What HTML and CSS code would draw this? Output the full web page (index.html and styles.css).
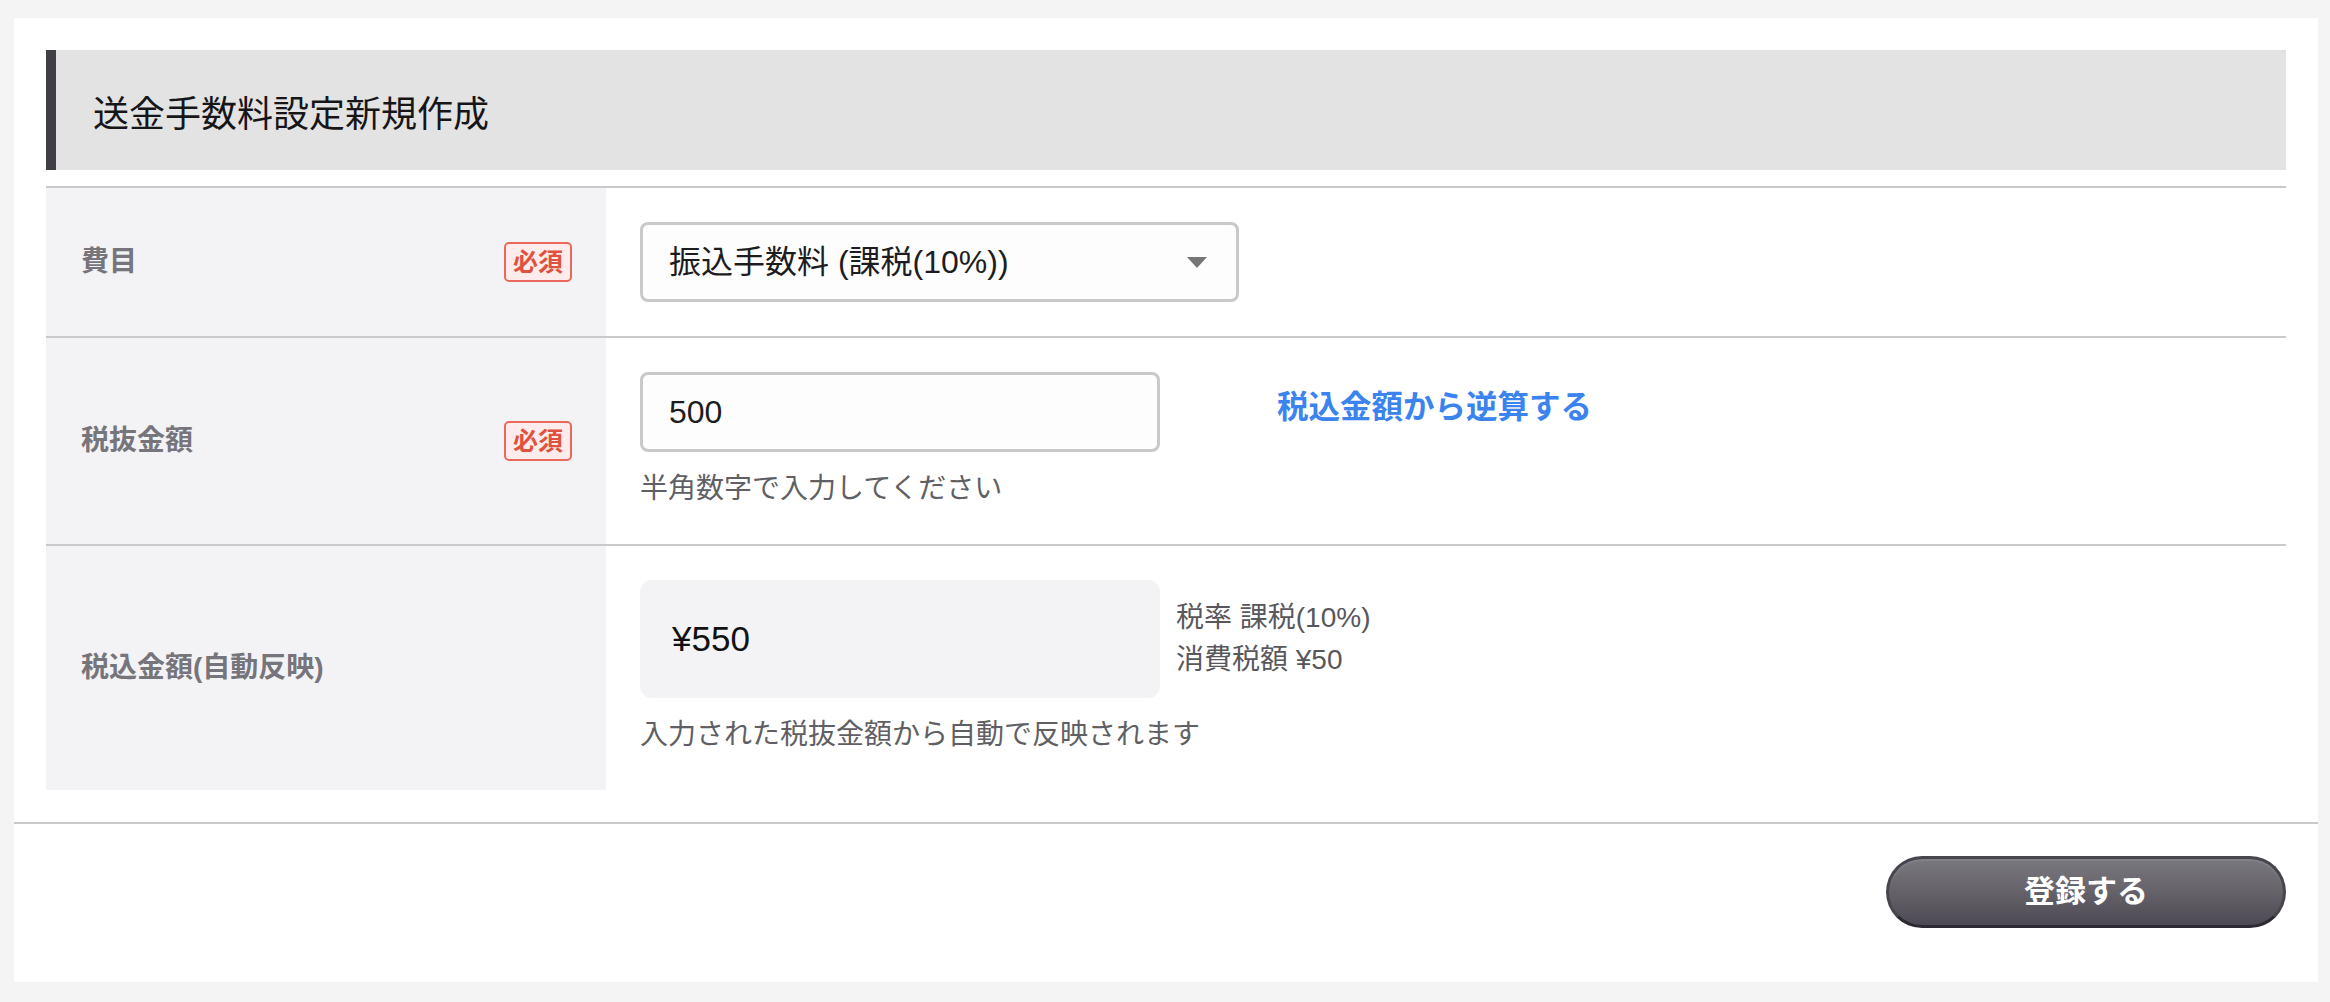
FILE: index.html
```html
<!DOCTYPE html>
<html lang="ja">
<head>
<meta charset="utf-8">
<title>送金手数料設定新規作成</title>
<link rel="stylesheet" href="styles.css">
</head>
<body>
<div class="page">
  <div class="card">
    <div class="card-body">
      <h1 class="title">送金手数料設定新規作成</h1>
      <div class="form-table">
        <div class="row">
          <div class="label-cell">
            <span class="label">費目</span>
            <span class="badge">必須</span>
          </div>
          <div class="value-cell">
            <div class="select">
              <span class="select-text">振込手数料 (課税(10%))</span>
              <svg class="select-arrow" width="20" height="11" viewBox="0 0 20 11"><polygon points="0,0 20,0 10,11" fill="#767676"/></svg>
            </div>
          </div>
        </div>
        <div class="row">
          <div class="label-cell">
            <span class="label">税抜金額</span>
            <span class="badge">必須</span>
          </div>
          <div class="value-cell">
            <div class="input-line">
              <input class="text-input" type="text" value="500">
              <a class="calc-link" href="#">税込金額から逆算する</a>
            </div>
            <p class="help">半角数字で入力してください</p>
          </div>
        </div>
        <div class="row row-last">
          <div class="label-cell">
            <span class="label">税込金額(自動反映)</span>
          </div>
          <div class="value-cell">
            <div class="input-line">
              <div class="amount-box">¥550</div>
              <div class="tax-info">
                <div class="tax-line">税率 課税(10%)</div>
                <div class="tax-line">消費税額 ¥50</div>
              </div>
            </div>
            <p class="help">入力された税抜金額から自動で反映されます</p>
          </div>
        </div>
      </div>
    </div>
    <div class="card-footer">
      <button class="btn-submit" type="button">登録する</button>
    </div>
  </div>
</div>
</body>
</html>
```

FILE: styles.css
```css
* {
  box-sizing: border-box;
}

html, body {
  margin: 0;
  padding: 0;
  background: #f4f4f4;
  font-family: "Liberation Sans", "Noto Sans CJK JP", sans-serif;
  color: #1c1c1e;
}

.page {
  padding: 18px 12px 20px 14px;
}

.card {
  background: #ffffff;
}

.card-body {
  padding: 32px 32px 32px 32px;
}

.title {
  margin: 0 0 16px 0;
  height: 120px;
  display: flex;
  align-items: center;
  padding: 9px 0 0 37px;
  background: #e3e3e3;
  border-left: 10px solid #413e46;
  font-size: 36px;
  line-height: 40px;
  font-weight: normal;
  color: #161618;
}

.form-table {
  border-top: 2px solid #c9c9cb;
}

.row {
  display: grid;
  grid-template-columns: 560px 1fr;
  border-bottom: 2px solid #c9c9cb;
}

.row-last {
  border-bottom: none;
}

.label-cell {
  background: #f3f3f5;
  display: flex;
  align-items: center;
  justify-content: space-between;
  padding: 0 34px 0 35px;
}

.label {
  font-size: 28px;
  line-height: 32px;
  font-weight: bold;
  color: #76757b;
}

.badge {
  width: 68px;
  height: 40px;
  display: flex;
  align-items: center;
  justify-content: center;
  border: 2px solid #e96a5d;
  border-radius: 5px;
  background: #fdeceb;
  color: #e05240;
  font-size: 25px;
  line-height: 30px;
  font-weight: bold;
}

.value-cell {
  padding: 34px 34px;
}

.select {
  width: 599px;
  height: 80px;
  border: 3px solid #c9c9c9;
  border-radius: 8px;
  background: #fdfdfe;
  display: flex;
  align-items: center;
  justify-content: space-between;
  padding: 0 29px 0 26px;
}

.select-text {
  font-size: 32px;
  line-height: 40px;
  color: #1d1d1f;
}

.select-arrow {
  display: block;
  flex: none;
}

.input-line {
  display: flex;
  align-items: center;
}

.text-input {
  width: 520px;
  height: 80px;
  margin: 0;
  border: 3px solid #c9c9c9;
  border-radius: 8px;
  background: #fdfdfe;
  padding: 0 0 0 26px;
  font-family: "Liberation Sans", "Noto Sans CJK JP", sans-serif;
  font-size: 32px;
  color: #1d1d1f;
  outline: none;
}

.calc-link {
  margin: 0 0 10px 117px;
  font-size: 31.5px;
  line-height: 36px;
  font-weight: bold;
  color: #3b84f0;
  text-decoration: none;
}

.help {
  margin: 16px 0 0 0;
  font-size: 28px;
  line-height: 42px;
  color: #606064;
}

.amount-box {
  width: 520px;
  height: 118px;
  background: #f3f3f5;
  border-radius: 12px;
  display: flex;
  align-items: center;
  padding-left: 32px;
  font-size: 35px;
  line-height: 40px;
  color: #111111;
}

.tax-info {
  margin-left: 16px;
}

.tax-line {
  font-size: 28px;
  line-height: 42px;
  color: #58585c;
}

.card-footer {
  border-top: 2px solid #c9c9cb;
  padding: 32px 32px 54px 32px;
  display: flex;
  justify-content: flex-end;
}

.btn-submit {
  width: 400px;
  height: 72px;
  border-radius: 36px;
  border: 3px solid #48454e;
  border-bottom-color: #2c2931;
  background: linear-gradient(to bottom, #7a787f 0%, #67646c 45%, #4c4952 100%);
  box-shadow: inset 0 2px 0 rgba(255, 255, 255, 0.08);
  color: #ffffff;
  font-family: "Liberation Sans", "Noto Sans CJK JP", sans-serif;
  font-size: 31px;
  line-height: 36px;
  font-weight: bold;
  cursor: pointer;
}
```
